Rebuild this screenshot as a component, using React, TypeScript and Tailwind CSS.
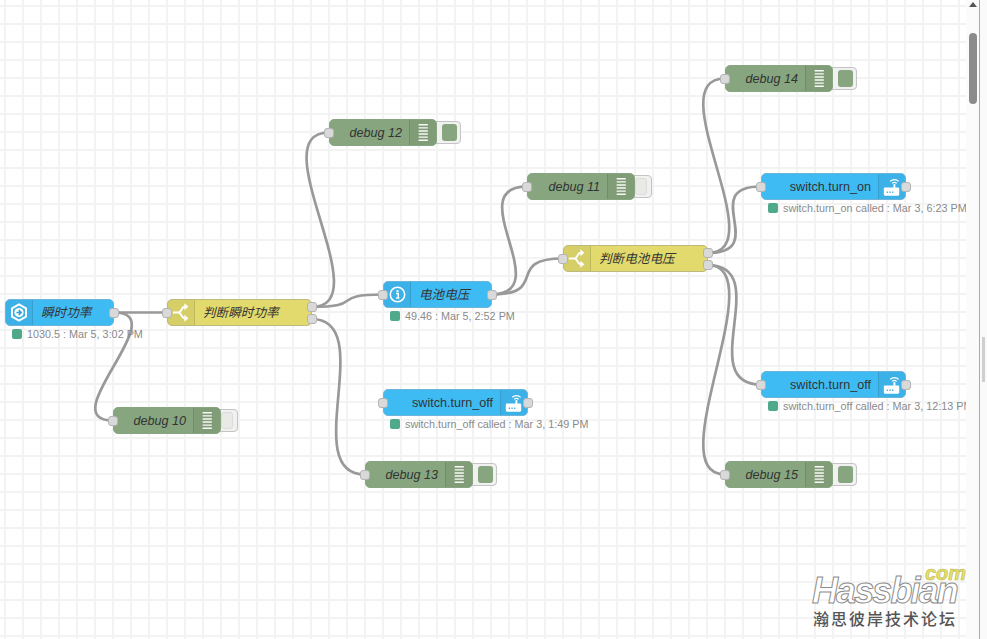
type Kind = 'inject' | 'info' | 'switch' | 'debug' | 'router';

type FlowNode = {
  id: string;
  kind: Kind;
  label: string;
  x: number;
  y: number;
  w: number;
  active?: boolean;
  status?: string;
};

const nodes: FlowNode[] = [
  { id: 'n1', kind: 'inject', label: '瞬时功率', x: 5, y: 299, w: 109, status: '1030.5 : Mar 5, 3:02 PM' },
  { id: 'n2', kind: 'switch', label: '判断瞬时功率', x: 167, y: 299, w: 145 },
  { id: 'n3', kind: 'debug', label: 'debug 10', x: 113, y: 407, w: 108 },
  { id: 'n4', kind: 'debug', label: 'debug 12', x: 329, y: 119, w: 108, active: true },
  { id: 'n5', kind: 'info', label: '电池电压', x: 383, y: 281, w: 109, status: '49.46 : Mar 5, 2:52 PM' },
  { id: 'n6', kind: 'router', label: 'switch.turn_off', x: 383, y: 389, w: 145, status: 'switch.turn_off called : Mar 3, 1:49 PM' },
  { id: 'n7', kind: 'debug', label: 'debug 13', x: 365, y: 461, w: 108, active: true },
  { id: 'n8', kind: 'debug', label: 'debug 11', x: 527, y: 173, w: 108 },
  { id: 'n9', kind: 'switch', label: '判断电池电压', x: 563, y: 245, w: 145 },
  { id: 'n10', kind: 'debug', label: 'debug 14', x: 725, y: 65, w: 108, active: true },
  { id: 'n11', kind: 'router', label: 'switch.turn_on', x: 761, y: 173, w: 145, status: 'switch.turn_on called : Mar 3, 6:23 PM' },
  { id: 'n12', kind: 'router', label: 'switch.turn_off', x: 761, y: 371, w: 145, status: 'switch.turn_off called : Mar 3, 12:13 PM' },
  { id: 'n13', kind: 'debug', label: 'debug 15', x: 725, y: 461, w: 108, active: true },
];

const wires = [
  'M114 312.5 L167 312.5',
  'M114 312.5 C176 312.5 51 420.5 113 420.5',
  'M311.5 307 C381.5 307 259 132.5 329 132.5',
  'M311.5 307 C366 307 328.5 294.5 383 294.5',
  'M311.5 319 C379 319 297.5 474.5 365 474.5',
  'M491 294.5 C558.5 294.5 459.5 186.5 527 186.5',
  'M491 294.5 C551 294.5 503 258.5 563 258.5',
  'M707.5 253 C775 253 657.5 78.5 725 78.5',
  'M707.5 253 C771.5 253 697 186.5 761 186.5',
  'M707.5 265 C775 265 693.5 384.5 761 384.5',
  'M707.5 265 C775 265 657.5 474.5 725 474.5',
];

function InjectIcon() {
  return (
    <svg width="27" height="27" viewBox="0 0 27 27">
      <path d="M13.5 5 L20.8 9.2 V17.8 L13.5 22 L6.2 17.8 V9.2 Z" fill="none" stroke="#fff" strokeWidth="2" strokeLinejoin="round" />
      <circle cx="13.5" cy="13.5" r="4.8" fill="#fff" />
      <path d="M10.8 13.5 H15.5 M13.2 11 L15.8 13.5 L13.2 16" fill="none" stroke="#3a9fd0" strokeWidth="1.6" />
    </svg>
  );
}

function InfoIcon() {
  return (
    <svg width="27" height="27" viewBox="0 0 27 27">
      <circle cx="14" cy="13.5" r="7.5" fill="none" stroke="#fff" strokeWidth="1.6" />
      <circle cx="14" cy="10" r="1.2" fill="#fff" />
      <path d="M12.6 12.5 H14.8 V17 M12.6 17.2 H16" fill="none" stroke="#fff" strokeWidth="1.5" />
    </svg>
  );
}

function SwitchIcon() {
  return (
    <svg width="27" height="27" viewBox="0 0 27 27">
      <path d="M5 13.5 H10.5 C14.5 13.5 13.5 7.5 17.5 7.5 M10.5 13.5 C14.5 13.5 13.5 19.5 17.5 19.5" fill="none" stroke="#fff" strokeWidth="2" />
      <path d="M17 3.8 L21.2 7.5 L17 11.2 Z M17 15.8 L21.2 19.5 L17 23.2 Z" fill="#fff" />
    </svg>
  );
}

function DebugIcon() {
  return (
    <svg width="27" height="27" viewBox="0 0 27 27">
      <path d="M9 5.5 H18.5 M9 8.7 H18.5 M9 11.9 H18.5 M9 15.1 H18.5 M9 18.3 H18.5 M9 21.5 H18.5" stroke="#fff" strokeWidth="1.4" opacity="0.95" />
    </svg>
  );
}

function RouterIcon() {
  return (
    <svg width="27" height="27" viewBox="0 0 27 27">
      <path d="M11.5 8.2 C14 5.8 18 5.8 20.5 8.2 M13.6 10.2 C15 9 17 9 18.4 10.2" fill="none" stroke="#fff" strokeWidth="1.2" />
      <rect x="15" y="11" width="2" height="4" fill="#fff" />
      <rect x="5" y="14.5" width="16" height="8.5" rx="1.2" fill="#fff" />
      <path d="M8 19.5 H9.4 M10.8 19.5 H12.2 M13.6 19.5 H15" stroke="#3fb0e6" strokeWidth="1.5" />
    </svg>
  );
}

function Port({ left, top }: { left: number; top: number }) {
  return (
    <div
      className="absolute h-[10px] w-[10px] rounded-[3px] border border-[#b4b4b4] bg-[#d9d9d9]"
      style={{ left, top }}
    />
  );
}

function NodeBox({ node }: { node: FlowNode }) {
  const bg =
    node.kind === 'switch'
      ? 'bg-[#e2da6d] border-[#bdb97f]'
      : node.kind === 'debug'
        ? 'bg-[#87a67f] border-[#87a67f]'
        : 'bg-[#3fbbf4] border-[#6cb5d8]';
  const rightIcon = node.kind === 'debug' || node.kind === 'router';
  const italic = node.kind !== 'router';

  return (
    <div className="absolute" style={{ left: node.x, top: node.y, width: node.w, height: 27 }}>
      {node.kind === 'debug' && (
        <div
          className="absolute top-[2px] h-[23px] rounded-r-[4px] border border-[#c4c4c4] bg-[#f1f1f1]"
          style={{ left: node.w - 6, width: node.active ? 30 : 23 }}
        >
          <div
            className={`absolute top-[2px] h-[17px] rounded-[3px] ${node.active ? 'left-[10px] w-[15px] bg-[#87a67f]' : 'left-[5px] w-[12px] border border-[#dcdcdc] bg-[#e9e9e6]'}`}
          />
        </div>
      )}
      <div className={`absolute inset-0 flex overflow-hidden rounded-[5px] border ${bg}`}>
        {!rightIcon && (
          <div className="flex w-[27px] shrink-0 items-center justify-center border-r border-black/10 bg-black/5">
            {node.kind === 'inject' && <InjectIcon />}
            {node.kind === 'info' && <InfoIcon />}
            {node.kind === 'switch' && <SwitchIcon />}
          </div>
        )}
        <div
          className={`flex min-w-0 flex-1 items-center whitespace-nowrap pt-[2px] text-[12.6px] text-[#333] ${rightIcon ? 'justify-end pr-[7px]' : 'pl-[8px]'} ${italic ? 'italic' : ''}`}
        >
          {node.label}
        </div>
        {rightIcon && (
          <div className="flex w-[27px] shrink-0 items-center justify-center border-l border-black/10 bg-black/5">
            {node.kind === 'debug' ? <DebugIcon /> : <RouterIcon />}
          </div>
        )}
      </div>
      {node.kind !== 'inject' && <Port left={-5} top={9} />}
      {node.kind === 'switch' ? (
        <>
          <Port left={node.w - 5} top={3} />
          <Port left={node.w - 5} top={15} />
        </>
      ) : (
        node.kind !== 'debug' && <Port left={node.w - 5} top={9} />
      )}
      {node.status && (
        <div className="absolute left-[7px] top-[30px] flex h-[10px] items-center gap-[5px] whitespace-nowrap text-[10.8px] text-[#8a8a8a]">
          <span className="h-[10px] w-[10px] shrink-0 rounded-[2px] bg-[#4fa98b]" />
          <span className="pt-[1px]">{node.status}</span>
        </div>
      )}
    </div>
  );
}

function Watermark() {
  return (
    <div className="absolute bottom-[5px] right-0 h-[72px] w-[156px] select-none">
      <div className="absolute left-[2px] top-[11px] text-[36px] font-bold italic leading-none tracking-[-1.9px] text-white [-webkit-text-stroke:1px_#8c8c8c]">
        Hassbian
      </div>
      <div className="absolute right-0 top-[1px] text-[20px] font-bold italic leading-none text-[#e8e262] [-webkit-text-stroke:0.6px_#b9b65a]">
        com
      </div>
      <div className="absolute left-[3px] top-[50px] whitespace-nowrap text-[16px] font-medium leading-none tracking-[2px] text-[#555]">
        瀚思彼岸技术论坛
      </div>
    </div>
  );
}

export default function App() {
  return (
    <div className="relative flex h-[639px] w-[987px] overflow-hidden bg-white [font-family:'Liberation_Sans','Noto_Sans_CJK_SC',sans-serif]">
      <div className="relative h-full w-[966px] shrink-0 overflow-hidden bg-white bg-[linear-gradient(to_right,#f3f3f3_2px,transparent_2px),linear-gradient(to_bottom,#f3f3f3_2px,transparent_2px)] bg-[size:18px_18px] bg-[position:4px_5px]">
        <svg className="absolute inset-0 h-full w-full">
          {wires.map((d) => (
            <path key={d} d={d} fill="none" stroke="#999" strokeWidth="2.7" />
          ))}
        </svg>
        {nodes.map((n) => (
          <NodeBox key={n.id} node={n} />
        ))}
        <Watermark />
      </div>

      {/* scrollbar gutter */}
      <div className="flex w-[13px] shrink-0 flex-col items-center bg-[#fbfbfb] pt-[2px]">
        <div className="h-0 w-0 border-x-[4px] border-b-[5px] border-x-transparent border-b-[#555]" />
        <div className="mt-[26px] h-[71px] w-[8px] rounded-[4px] bg-[#8b8b8b]" />
      </div>

      <div className="flex-1 border-l border-[#aaa] bg-[#fafafa]">
        <div className="ml-[2px] mt-[337px] h-[45px] w-[3px] bg-[#cfcfcf]" />
      </div>
    </div>
  );
}
